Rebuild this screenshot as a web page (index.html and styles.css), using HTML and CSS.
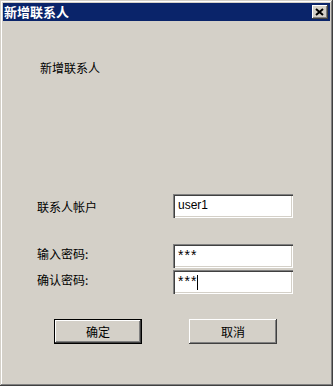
FILE: index.html
```html
<!DOCTYPE html>
<html lang="zh-CN">
<head>
    <meta charset="UTF-8">
    <title>新增联系人</title>
    <link rel="stylesheet" href="styles.css">
</head>
<body>
    <div class="window">
        <div class="titlebar">
            <span class="title">新增联系人</span>
            <div class="close">
                <svg width="9" height="8" viewBox="0 0 9 8"><path d="M1 1L8 7M8 1L1 7" stroke="#000" stroke-width="2" fill="none"/></svg>
            </div>
        </div>
        <div class="content">
            <p class="heading">新增联系人</p>
            <div class="row first">
                <span class="label">联系人帐户</span>
                <div class="field">user1</div>
            </div>
            <div class="row second">
                <span class="label pw">输入密码:</span>
                <div class="field"><span class="mask">***</span></div>
            </div>
            <div class="row third">
                <span class="label pw">确认密码:</span>
                <div class="field"><span class="mask">***</span><span class="caret"></span></div>
            </div>
            <div class="buttons">
                <button type="button" class="btn default">确定</button>
                <button type="button" class="btn">取消</button>
            </div>
        </div>
    </div>
</body>
</html>
```

FILE: styles.css
```css
html, body {margin: 0; padding: 0; background: #d4d0c8;}
body {font-family: "Noto Sans CJK SC", "Liberation Sans", sans-serif; font-size: 12px; color: #000;}
.window {width: 333px; height: 386px; box-sizing: border-box; padding: 3px; background: #d4d0c8;
    box-shadow: inset -1px -1px #404040, inset 1px 1px #d4d0c8, inset -2px -2px #808080, inset 2px 2px #fff;}
.titlebar {height: 18px; background: #0a246a; display: flex; align-items: center; justify-content: space-between; padding: 0 2px 0 1px;}
.title {color: #fff; font-weight: bold; font-size: 13px; line-height: 14px;}
.close {width: 16px; height: 14px; box-sizing: border-box; background: #d4d0c8; display: flex; align-items: center; justify-content: center;
    box-shadow: inset -1px -1px #404040, inset 1px 1px #fff, inset -2px -2px #808080;}
.close svg {display: block; margin: 0 0 0 -1px;}
.content {padding-left: 34px;}
.heading {margin: 40px 0 0 3px; line-height: 14px;}
.row {display: flex; align-items: flex-start;}
.row.first {margin-top: 119px;}
.row.second {margin-top: 26px;}
.row.third {margin-top: 2px;}
.label {width: 136px; line-height: 12px; padding-top: 7px;}
.label.pw {padding-top: 4px;}
.field {width: 120px; height: 24px; box-sizing: border-box; background: #fff; padding: 3px 0 0 5px;
    font-family: "Liberation Sans", sans-serif; font-size: 12px; line-height: 16px;
    box-shadow: inset 1px 1px #808080, inset 2px 2px #404040, inset -1px -1px #fff, inset -2px -2px #d4d0c8;}
.mask {font-size: 14px; letter-spacing: 1px;}
.caret {display: inline-block; width: 1px; height: 15px; background: #000; vertical-align: -4px;}
.buttons {display: flex; gap: 47px; margin: 25px 0 0 17px;}
.btn {width: 88px; height: 25px; padding: 0; border: none; background: #d4d0c8; font-family: inherit; font-size: 12px; color: #000;
    box-shadow: inset -1px -1px #404040, inset 1px 1px #fff, inset -2px -2px #808080;}
.btn.default {box-shadow: inset 0 0 0 1px #000, inset -2px -2px #404040, inset 2px 2px #fff, inset -3px -3px #808080;}
```
